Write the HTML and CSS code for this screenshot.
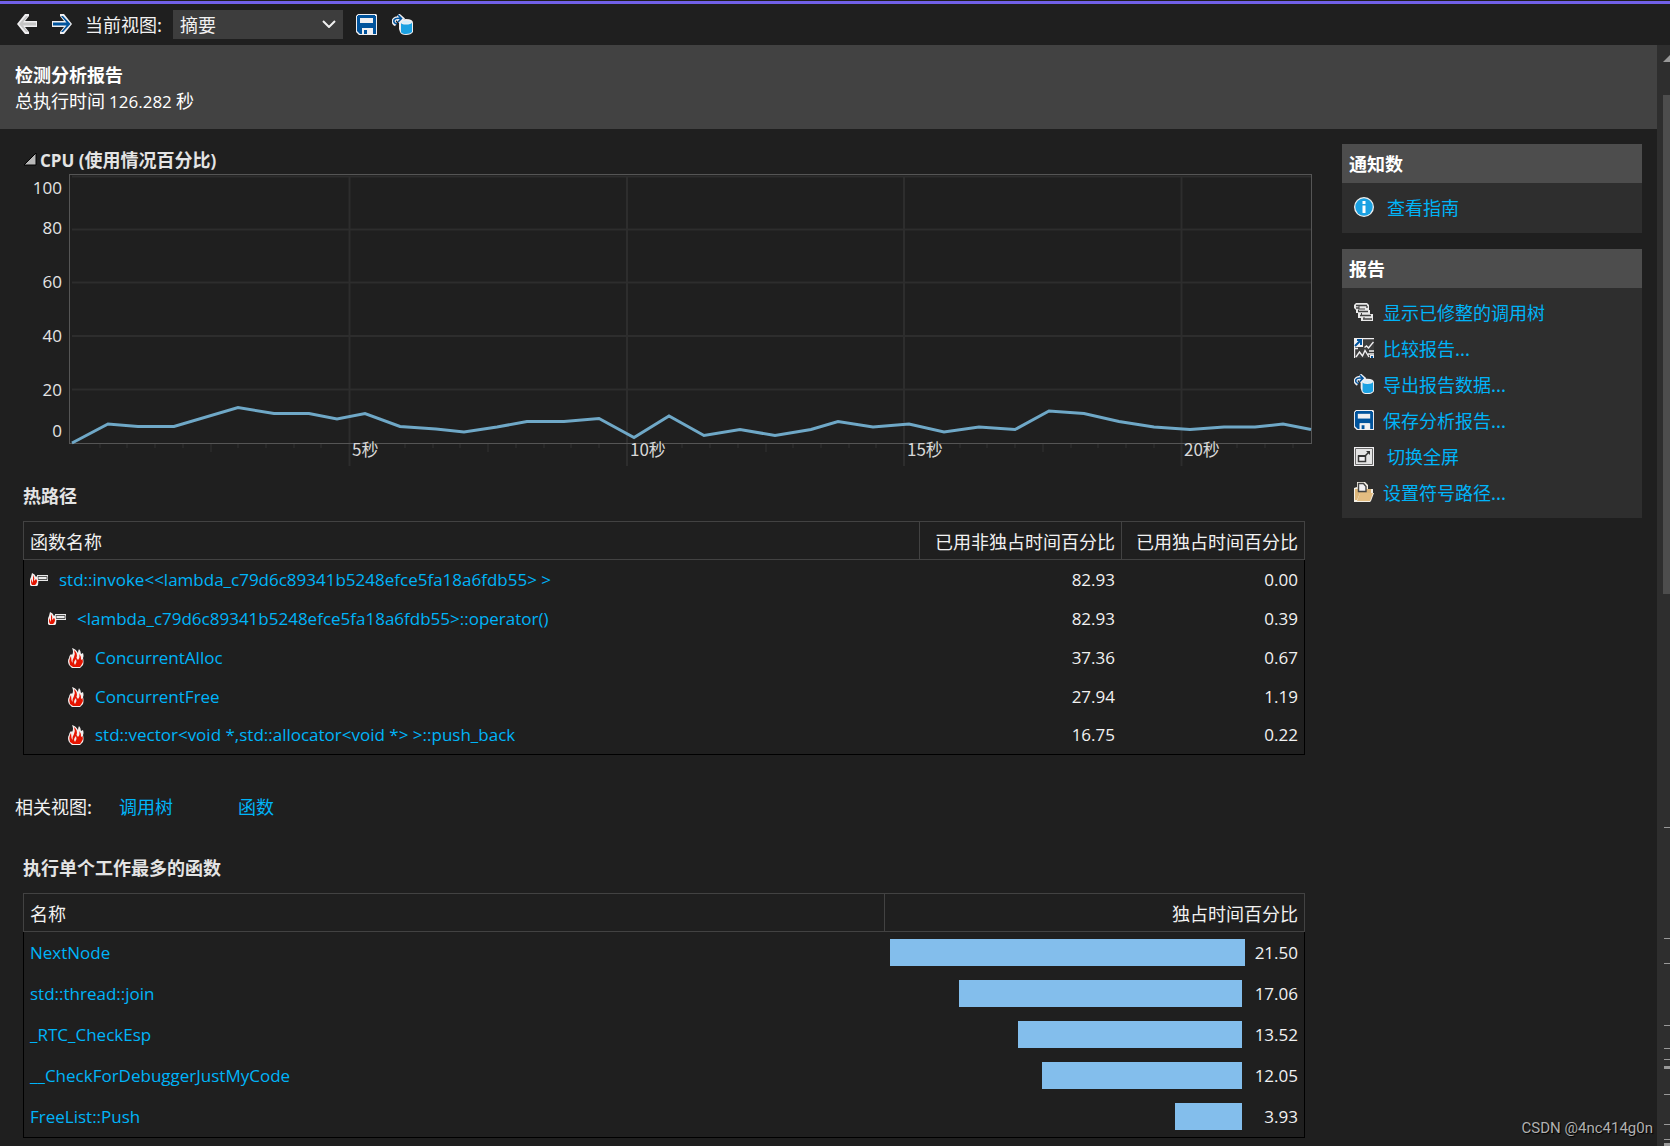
FILE: index.html
```html
<!DOCTYPE html>
<html lang="zh-CN">
<head>
<meta charset="utf-8">
<meta name="viewport" content="width=device-width, initial-scale=1">
<title>检测分析报告</title>
<link rel="stylesheet" href="styles.css">
</head>
<body>
<svg class="defs" width="0" height="0" aria-hidden="true">
  <symbol id="i-save" viewBox="0 0 21 21">
    <path d="M2 0h18l1 1v20H3l-3-3V2z" fill="#f0eff1"/>
    <path d="M2 1h17v1h1v18h-3v-6H6v6H4l-3-3V2h1z" fill="#00539c"/>
    <path d="M4 4h13v5H4z" fill="#f0eff1"/>
    <path d="M3 2h15v1H3z" fill="#00539c"/>
    <path d="M6 14h10v7H6z" fill="#f0eff1"/>
    <path d="M8 16h3v4H8z" fill="#00539c"/>
  </symbol>
  <symbol id="i-export" viewBox="0 0 21 21">
    <path d="M7 9q0-4 7-4t7 4v9q-2 3-7 3t-6-3l-1-3z" fill="#f0eff1"/>
    <path d="M9 8.500q0 2 5 2t6-2V18q-2 2-6 2t-5-2z" fill="#1ba1e2"/>
    <ellipse cx="14.500" cy="8" rx="4.500" ry="1.500" fill="#d6eefb"/>
    <path d="M4 10.500Q1 9 2 6q1.500-2.500 7-2M6 1l4 3.500L6 8" fill="none" stroke="#f0eff1" stroke-width="4"/>
    <path d="M5 10Q1 9 2 6q1.500-2.500 7-1.500M6 1l3.500 3.500L6 8" fill="none" stroke="#00539c" stroke-width="1.600"/>
  </symbol>
  <symbol id="i-info" viewBox="0 0 20 20">
    <circle cx="10" cy="10" r="10" fill="#f0f0f0"/>
    <circle cx="10" cy="10" r="8.700" fill="#1ba1e2"/>
    <path d="M8.500 4h3v3h-3zM8.500 8.500h3V16h-3z" fill="#fff"/>
  </symbol>
  <symbol id="i-tree" viewBox="0 0 20 18">
    <path d="M2 0h11l2 2v5h1v4h3v7H7v-3H4v-5H2V7l-2-2V2z" fill="#e8e8e8"/>
    <path d="M2 2.500h11M2 5h3M13 5V3M4 8.500h10M6 12.500h11M9 16h9" fill="none" stroke="#424242" stroke-width="1.400"/>
    <path d="M5 3v3h6M4.500 6.500v2M7.500 10v3M10 14v2" fill="none" stroke="#424242"/>
  </symbol>
  <symbol id="i-compare" viewBox="0 0 20 20">
    <path d="M0 0h20v20H0z" fill="#3c3c3c"/>
    <path d="M.5 20V.5H20M10.500 9.500l2-1.500 2 2 5-6M0 10.500h4M2 19l3.500-5 3 4 2.500-5.500 4 6.500M15 13h5M14 16h6" fill="none" stroke="#f0eff1" stroke-width="1.400"/>
    <path d="M0 0h9v9H0z" fill="#f0eff1"/>
    <path d="M1 8l6-6M3 2h4v5" fill="none" stroke="#00539c" stroke-width="2"/>
    <path d="M16 17h4v3h-4z" fill="#f0eff1"/>
    <path d="M17 18h2v2h-2z" fill="#00539c"/>
  </symbol>
  <symbol id="i-full" viewBox="0 0 20 19">
    <path d="M0 0h20v19H0z" fill="#f0eff1"/>
    <path d="M1.500 1.500h17v16h-17z" fill="#e4e4e4" stroke="#6b6b6b"/>
    <path d="M4.500 9h7v5.500h-7z" fill="#f0eff1" stroke="#3a3a3a" stroke-width="1.500"/>
    <path d="M4 8h8v2H4zM12 4h4v4z" fill="#333"/>
    <path d="M11 9l4-4" stroke="#333" stroke-width="1.500"/>
  </symbol>
  <symbol id="i-folder" viewBox="0 0 20 20">
    <path d="M0 6l3-1V0h8l3 3v4h5v4h1l-3 8-1 1H0z" fill="#f5f0e6"/>
    <path d="M1 7h3v3h7V7h6v4H6l-3 7H1z" fill="#dcb67a"/>
    <path d="M4.500 1.500h5l2.500 3V9.500h-7.500z" fill="#f0eff1" stroke="#424242" stroke-width="1.400"/>
    <path d="M6 11h13l-3 8H3z" fill="#e3bd82"/>
  </symbol>
  <symbol id="i-flame" viewBox="0 0 16 20">
    <path d="M4 0q4 1 6 5 0-2 1-4 2 2 2 5l2-1q1 3 0 5 1 4 0 7l-3 3H4l-3-3q-2-4 0-7 0-2 2-4l1 1q2-3 0-7z" fill="#f4efee"/>
    <path d="M6 2q4 3 2.500 8l1.500 2q2-2 1.500-6 2 3 1.500 6l1.500-1q1 3-.5 5l-2 3H5l-3-2q-1.500-4 0-7l1-2 .5 5 1 2q0-4 1.500-6 1.500-3 0-7z" fill="#e51400"/>
    <path d="M8 11l.5 3-1.500 3-1-2q0-2 2-4z" fill="#f4efee"/>
  </symbol>
  <symbol id="i-hot" viewBox="0 0 18 13">
    <path d="M7 2h11v6H7z" fill="#e8e8e8"/>
    <path d="M8 3.500h9v3H8z" fill="#e8e8e8" stroke="#555"/>
    <path d="M2 0q3 1 4 4l1-1q2 3 1 9l-1 1H1l-1-1q-1-4 1-8z" fill="#f4efee"/>
    <path d="M3 2q2 3 1 6l2-2q2 2 0 5l-1 1H2Q0 9 2 6v4l1-2z" fill="#e51400"/>
  </symbol>
</svg>

<header class="toolbar">
  <button class="tool" type="button" aria-label="后退">
    <svg width="20" height="20" viewBox="0 0 20 20"><path d="M0 10L8 0h4v2L8 7h12v6H8l4 5v2H8z" fill="#f0eff1"/><path d="M2 10l7-8h2L6 8.500h13v3H6l5 6.500H9z" fill="#c5c5c5"/></svg>
  </button>
  <button class="tool" type="button" aria-label="前进">
    <svg width="20" height="20" viewBox="0 0 20 20"><path d="M20 10L12 0H8v2l4 5H0v6h12l-4 5v2h4z" fill="#f0eff1"/><path d="M18.500 10L11 2H9l5.500 6.500H1v3h13.500L9 18h2z" fill="#00539c"/></svg>
  </button>
  <div class="view">
    <label for="view">当前视图:</label>
    <div class="view-select">
      <select id="view"><option>摘要</option></select>
      <svg class="chevron" width="14" height="8" viewBox="0 0 14 8" aria-hidden="true"><path d="M1 1l6 6 6-6" fill="none" stroke="#f1f1f1" stroke-width="2"/></svg>
    </div>
  </div>
  <button class="tool" type="button" aria-label="保存分析报告"><svg width="21" height="21"><use href="#i-save"/></svg></button>
  <button class="tool" type="button" aria-label="导出报告数据"><svg width="21" height="21"><use href="#i-export"/></svg></button>
</header>

<div class="workspace">
  <main class="report">
    <div class="report-head">
      <h1>检测分析报告</h1>
      <p>总执行时间 <span class="latin">126.282</span> 秒</p>
    </div>

    <div class="columns">
      <div class="content">
        <section>
          <h2 class="cpu-title">
            <button type="button" aria-expanded="true">
              <svg width="14" height="14" viewBox="0 0 14 14" aria-hidden="true"><path d="M1 13L13 1v12z" fill="#b8b8b8" stroke="#000"/></svg>
              <span><span class="latin">CPU (</span>使用情况百分比<span class="latin">)</span></span>
            </button>
          </h2>
          <div class="chart">
            <div class="axis">
              <span>100</span><span>80</span><span>60</span><span>40</span><span>20</span><span>0</span>
            </div>
            <svg class="plot" viewBox="0 0 1243 292" role="img" aria-label="CPU 使用情况">
              <path class="grid" d="M3 2.500H1242M3 55.500H1242M3 108.500H1242M3 162H1242M3 215.500H1242M280.500 2V292M558 2V292M835 2V292M1112.500 2V292"/>
              <path class="ticks" d="M31 270v4M58 270v4M86 270v4M114 270v4M142 270v8M169 270v4M197 270v4M225 270v4M252 270v4M308 270v4M336 270v4M364 270v4M391 270v4M419 270v8M447 270v4M475 270v4M502 270v4M530 270v4M585 270v4M613 270v4M641 270v4M669 270v4M697 270v8M724 270v4M752 270v4M780 270v4M807 270v4M863 270v4M891 270v4M918 270v4M946 270v4M974 270v8M1002 270v4M1029 270v4M1057 270v4M1085 270v4M1140 270v4M1168 270v4M1196 270v4M1224 270v4"/>
              <rect class="frame" x=".5" y=".5" width="1242" height="269"/>
              <polyline class="line" points="3,269 39,250 69,252.500 105,252.500 169,233.500 205,239.500 240,239.500 268,245 296,239.500 331,252.500 367,255 395,258 428,253 458,247.500 495,247.500 530,244.500 565,263.500 600,242 635,261.500 671,255.500 706,261.500 742,255.500 769,247.500 804,253 840,250 875,258 910,253 946,255.500 980,237 1015,239.500 1050,247.500 1085,253 1121,255.500 1155,253 1186,253 1214,250 1242,255.500"/>
              <text x="283" y="282">5秒</text>
              <text x="561" y="282">10秒</text>
              <text x="838" y="282">15秒</text>
              <text x="1115" y="282">20秒</text>
            </svg>
          </div>
        </section>

        <section class="block hot">
          <h2>热路径</h2>
          <table class="hot-table">
            <thead>
              <tr><th scope="col">函数名称</th><th scope="col" class="num">已用非独占时间百分比</th><th scope="col" class="num">已用独占时间百分比</th></tr>
            </thead>
            <tbody>
              <tr><td><div class="fn"><svg width="18" height="13"><use href="#i-hot"/></svg><a href="#">std::invoke&lt;&lt;lambda_c79d6c89341b5248efce5fa18a6fdb55&gt; &gt;</a></div></td><td class="num">82.93</td><td class="num">0.00</td></tr>
              <tr><td><div class="fn level-1"><svg width="18" height="13"><use href="#i-hot"/></svg><a href="#">&lt;lambda_c79d6c89341b5248efce5fa18a6fdb55&gt;::operator()</a></div></td><td class="num">82.93</td><td class="num">0.39</td></tr>
              <tr><td><div class="fn level-2"><svg width="16" height="20"><use href="#i-flame"/></svg><a href="#">ConcurrentAlloc</a></div></td><td class="num">37.36</td><td class="num">0.67</td></tr>
              <tr><td><div class="fn level-2"><svg width="16" height="20"><use href="#i-flame"/></svg><a href="#">ConcurrentFree</a></div></td><td class="num">27.94</td><td class="num">1.19</td></tr>
              <tr><td><div class="fn level-2"><svg width="16" height="20"><use href="#i-flame"/></svg><a href="#">std::vector&lt;void *,std::allocator&lt;void *&gt; &gt;::push_back</a></div></td><td class="num">16.75</td><td class="num">0.22</td></tr>
            </tbody>
          </table>
        </section>

        <nav class="related" aria-label="相关视图">
          <span>相关视图:</span>
          <a href="#">调用树</a>
          <a href="#">函数</a>
        </nav>

        <section class="block">
          <h2>执行单个工作最多的函数</h2>
          <table class="work-table">
            <thead>
              <tr><th scope="col">名称</th><th scope="col" class="num">独占时间百分比</th></tr>
            </thead>
            <tbody>
              <tr><td><a href="#">NextNode</a></td><td><div class="meter"><span class="bar" style="width:87%"></span><span class="value value-max">21.50</span></div></td></tr>
              <tr><td><a href="#">std::thread::join</a></td><td><div class="meter"><span class="bar" style="width:69.3%"></span><span class="value">17.06</span></div></td></tr>
              <tr><td><a href="#">_RTC_CheckEsp</a></td><td><div class="meter"><span class="bar" style="width:55%"></span><span class="value">13.52</span></div></td></tr>
              <tr><td><a href="#">__CheckForDebuggerJustMyCode</a></td><td><div class="meter"><span class="bar" style="width:49.1%"></span><span class="value">12.05</span></div></td></tr>
              <tr><td><a href="#">FreeList::Push</a></td><td><div class="meter"><span class="bar" style="width:16.5%"></span><span class="value">3.93</span></div></td></tr>
            </tbody>
          </table>
        </section>
      </div>

      <aside class="side">
        <section class="panel">
          <h2>通知数</h2>
          <ul>
            <li class="spaced"><svg width="20" height="20"><use href="#i-info"/></svg><a href="#">查看指南</a></li>
          </ul>
        </section>
        <section class="panel">
          <h2>报告</h2>
          <ul>
            <li><svg width="20" height="18"><use href="#i-tree"/></svg><a href="#">显示已修整的调用树</a></li>
            <li><svg width="20" height="20"><use href="#i-compare"/></svg><a href="#">比较报告...</a></li>
            <li><svg width="20" height="20"><use href="#i-export"/></svg><a href="#">导出报告数据...</a></li>
            <li><svg width="20" height="20"><use href="#i-save"/></svg><a href="#">保存分析报告...</a></li>
            <li class="spaced"><svg width="20" height="19"><use href="#i-full"/></svg><a href="#">切换全屏</a></li>
            <li><svg width="20" height="20"><use href="#i-folder"/></svg><a href="#">设置符号路径...</a></li>
          </ul>
        </section>
      </aside>
    </div>
    <span class="watermark">CSDN @4nc414g0n</span>
  </main>

  <div class="scrollbar" aria-hidden="true">
    <svg class="scroll-up" width="7" height="7" viewBox="0 0 7 7"><path d="M0 7l7-7v7z" fill="#999"/></svg>
    <div class="thumb"></div>
    <svg class="marks" width="6" height="319" viewBox="0 0 6 319"><path d="M0 0h6v1H0zM0 111h6v1H0zM0 136h6v1H0zM0 198h6v1H0zM0 221h6v1H0zM0 232h6v1H0zM0 239h6v3H0zM0 267h6v1H0zM0 297h6v1H0zM0 312h6v1H0zM0 316h6v3H0z" fill="#999"/></svg>
  </div>
</div>
</body>
</html>
```
FILE: styles.css
```css
* {
  box-sizing: border-box;
}

body {
  margin: 0;
  min-height: 100vh;
  display: flex;
  flex-direction: column;
  background: #1f1f1f;
  color: #f1f1f1;
  font: 18px/24px "Noto Sans CJK SC", sans-serif;
}

h1, h2, p, ul {
  margin: 0;
  padding: 0;
  font-size: 18px;
}

h2 {
  color: #e4e4e4;
}

a {
  color: #00b4f8;
  text-decoration: none;
}

svg {
  display: block;
  flex: none;
}

button {
  padding: 0;
  border: 0;
  background: none;
  color: inherit;
  font: inherit;
}

.defs {
  position: absolute;
}

.latin,
.axis,
tbody {
  font-family: "Open Sans", "Noto Sans CJK SC", sans-serif;
  font-size: 17px;
}

.latin {
  line-height: 1;
}

/* Toolbar */
.toolbar {
  height: 45px;
  padding: 2px 17px 0;
  border-top: 1px solid #1f1f1f;
  box-shadow: inset 0 3px #7160e8;
  display: flex;
  align-items: center;
  gap: 15px;
}

.view {
  margin: 0 -2px;
  display: flex;
  align-items: center;
  gap: 11px;
}

.view-select {
  display: grid;
  align-items: center;
  width: 170px;
}

.view-select > * {
  grid-area: 1 / 1;
}

.view-select select {
  appearance: none;
  height: 29px;
  padding: 0 7px;
  border: 0;
  border-radius: 0;
  background: #3d3d3d;
  color: #f1f1f1;
  font: inherit;
}

.chevron {
  justify-self: end;
  margin-right: 7px;
  pointer-events: none;
}

/* Report */
.workspace {
  flex: 1;
  display: flex;
}

.report {
  flex: 1;
  min-width: 0;
  position: relative;
}

.report-head {
  padding: 16px 15px;
  background: #424242;
  color: #fff;
  line-height: 26px;
}

.columns {
  display: grid;
  grid-template-columns: minmax(0, 1fr) 300px;
  gap: 30px;
  padding: 15px 15px 7px 0;
}

/* CPU chart */
.cpu-title {
  height: 30px;
  padding-left: 23px;
}

.cpu-title button {
  height: 30px;
  display: flex;
  align-items: center;
  gap: 3px;
}

.chart {
  display: grid;
  grid-template-columns: 69px minmax(0, 1fr);
  color: #e4e4e4;
}

.axis {
  height: 270px;
  padding-right: 7px;
  display: grid;
  grid-template-rows: 1fr 2fr 2fr 2fr 2fr 1fr;
  align-items: center;
  text-align: right;
}

.plot {
  width: 100%;
}

.grid {
  fill: none;
  stroke: #2d2d2d;
  stroke-width: 2;
}

.ticks {
  stroke: #333;
  stroke-width: 1;
}

.frame {
  fill: none;
  stroke: #555;
}

.line {
  fill: none;
  stroke: #6fa8c7;
  stroke-width: 3;
}

.plot text {
  fill: #d8d8d8;
  font-size: 17px;
}

/* Tables */
.block {
  padding: 0 7px 0 23px;
}

.hot {
  padding-top: 17px;
}

table {
  width: 100%;
  margin-top: 14px;
  border-spacing: 0;
  table-layout: fixed;
}

th {
  height: 39px;
  padding: 0 6px;
  border: solid #424242;
  border-width: 1px 0 1px 1px;
  font-weight: 400;
  text-align: left;
}

th:last-child {
  border-right-width: 1px;
}

td {
  padding: 0 6px;
}

td:first-child {
  border-left: 1px solid #000;
}

td:last-child {
  border-right: 1px solid #000;
}

tr:last-child td {
  border-bottom: 1px solid #000;
}

.num {
  text-align: right;
}

.hot-table td {
  height: 39px;
}

.hot-table th:nth-child(2) {
  width: 202px;
}

.hot-table th:nth-child(3) {
  width: 184px;
}

.fn {
  display: flex;
  align-items: center;
  gap: 11px;
}

.level-1 {
  padding-left: 18px;
}

.level-2 {
  padding-left: 38px;
}

.related {
  display: flex;
  gap: 65px;
  padding: 39px 15px 37px;
}

.related span {
  margin-right: -38px;
}

.work-table th:last-child {
  width: 421px;
}

.work-table td {
  padding: 7px 6px;
}

.meter {
  display: flex;
  justify-content: flex-end;
  align-items: center;
}

.bar {
  height: 27px;
  background: #83beec;
}

.value {
  width: 56px;
  text-align: right;
}

.value-max {
  width: 53px;
}

/* Side panels */
.side {
  display: flex;
  flex-direction: column;
  gap: 16px;
}

.panel {
  background: #2e2e2e;
}

.panel h2 {
  padding: 0 7px;
  background: #4d4d4d;
  color: #fff;
  line-height: 39px;
}

.panel ul {
  padding: 6px 12px 8px;
  list-style: none;
}

.panel li {
  display: flex;
  align-items: center;
  gap: 9px;
  height: 36px;
}

.panel .spaced {
  gap: 13px;
}

.watermark {
  position: absolute;
  right: 4px;
  bottom: 6px;
  color: #b0b0b0;
  font: 15px/24px Roboto, sans-serif;
  text-shadow: 1px 1px 1px #000;
}

/* Scroll bar */
.scrollbar {
  flex: none;
  width: 13px;
  padding: 10px 0 0 6px;
  background: #2e2e2e;
  display: flex;
  flex-direction: column;
}

.thumb {
  height: 499px;
  margin-top: 33px;
  background: #4d4d4d;
}

.marks {
  margin: auto 0 0 1px;
}
```
